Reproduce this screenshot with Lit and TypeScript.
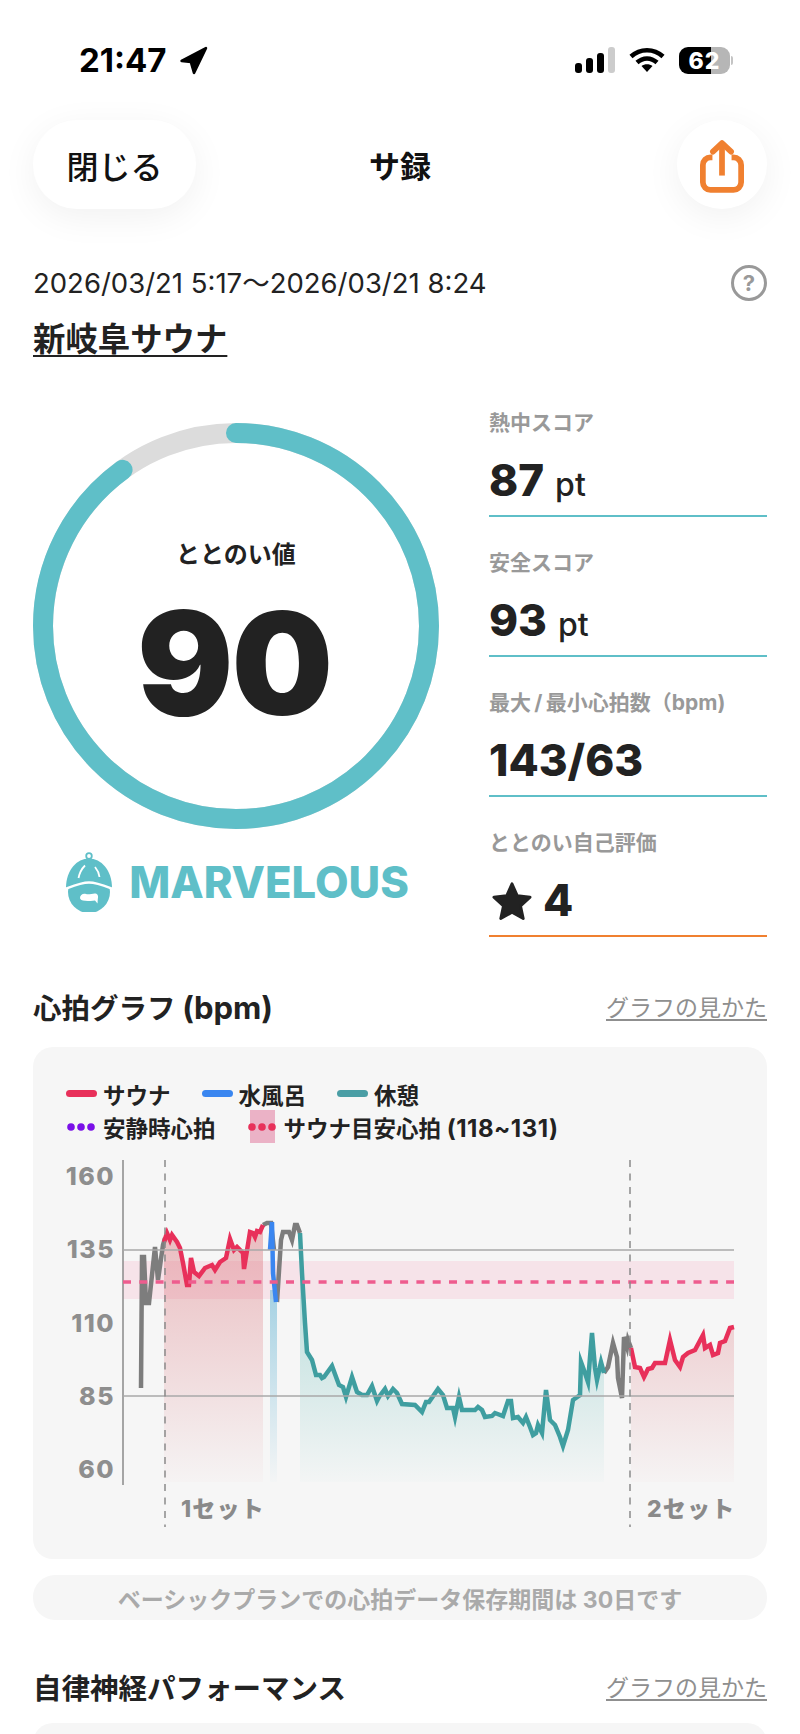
import { LitElement, html, css, svg } from "lit";
import { customElement } from "lit/decorators.js";

type P = [number, number];
const gray1: P[] = [[141,1388],[142,1257],[144,1257],[146,1303],[149,1303],[155,1247],[158,1280],[163,1245],[165,1238]];
const red1: P[] = [[164,1242],[167,1233],[170,1240],[172,1235],[177,1242],[180,1248],[183,1263],[187,1285],[189,1285],[191,1258],[194,1272],[199,1276],[205,1268],[212,1265],[215,1270],[220,1262],[226,1258],[230,1239],[234,1250],[237,1247],[243,1253],[244,1269],[250,1232],[253,1233],[255,1237],[257,1231],[260,1232],[263,1225]];
const gray2: P[] = [[263,1225],[267,1223],[271,1223],[274,1250]];
const blue: P[] = [[270,1250],[272,1222],[273,1273],[276,1302]];
const gray3: P[] = [[277,1302],[281,1240],[283,1232],[289,1232],[292,1240],[295,1225],[297,1225],[300,1233]];
const teal: P[] = [[300,1233],[302,1273],[305,1323],[307,1352],[312,1360],[316,1375],[320,1375],[322,1378],[324,1377],[332,1366],[339,1385],[343,1387],[346,1397],[352,1377],[357,1392],[362,1395],[367,1395],[372,1386],[377,1401],[379,1397],[385,1389],[388,1396],[393,1389],[397,1393],[402,1404],[415,1405],[422,1412],[426,1402],[429,1402],[438,1389],[443,1395],[447,1408],[453,1408],[455,1417],[459,1397],[462,1410],[475,1410],[478,1407],[482,1410],[485,1417],[492,1416],[495,1413],[503,1416],[508,1401],[511,1401],[513,1418],[518,1417],[523,1423],[526,1417],[530,1427],[533,1435],[536,1433],[538,1425],[542,1433],[546,1390],[550,1420],[555,1425],[560,1437],[563,1446],[568,1430],[573,1400],[580,1395],[581,1362],[585,1373],[588,1382],[592,1333],[595,1368],[597,1380],[601,1362],[604,1373]];
const gray4: P[] = [[604,1373],[608,1367],[613,1343],[617,1357],[618,1378],[622,1398],[624,1337],[627,1347],[628,1340],[631,1348]];
const red2: P[] = [[631,1348],[635,1367],[640,1368],[644,1377],[648,1369],[652,1368],[655,1363],[665,1363],[670,1340],[675,1360],[680,1367],[683,1357],[688,1353],[695,1350],[703,1335],[705,1348],[710,1345],[713,1355],[718,1353],[720,1343],[725,1341],[730,1328],[734,1327]];

const pts = (a: P[]) => a.map((p) => p.join(",")).join(" ");
const area = (a: P[], bottom = 1482) =>
  `${a[0][0]},${bottom} ${pts(a)} ${a[a.length - 1][0]},${bottom}`;

const yTicks: [string, number][] = [["160",1185],["135",1258],["110",1332],["85",1405],["60",1478]];

@customElement("app-root")
export class AppRoot extends LitElement {
  static styles = css`
    :host {
      display: block;
      width: 800px;
      height: 1734px;
      overflow: hidden;
      background: #fff;
      color: #222;
      font-family: Inter, "Noto Sans CJK JP", sans-serif;
    }
    .status { height: 120px; display: flex; align-items: center; justify-content: space-between; padding: 0 67px 0 79px; box-sizing: border-box; color: #000; }
    .time { display: flex; align-items: center; gap: 12px; font-size: 33px; font-weight: 700; line-height: 1; }
    .status-right { display: flex; align-items: center; gap: 14px; }
    .battery { position: relative; width: 54px; height: 27px; display: block; }
    .battery::after { content: ""; position: absolute; left: 52px; top: 9px; width: 2px; height: 9px; border-radius: 0 2px 2px 0; background: #c4c4c4; }
    .battery-num { display: grid; place-items: center; width: 51px; height: 27px; border-radius: 9px; font-size: 23px; font-weight: 800; letter-spacing: 1px; color: #fff; background: linear-gradient(90deg, #000 0 63%, #b6b6b6 63% 100%); }
    .nav { height: 89px; padding: 0 33px; display: grid; grid-template-columns: 1fr auto 1fr; align-items: center; }
    .close { justify-self: start; width: 163px; height: 89px; border-radius: 44px; background: #fff; box-shadow: 0 8px 36px rgba(0,0,0,.06); display: grid; place-items: center; font-size: 32px; font-weight: 500; color: #111; }
    .title { font-size: 31px; font-weight: 700; color: #111; }
    .share { justify-self: end; width: 90px; height: 89px; border-radius: 50%; background: #fff; box-shadow: 0 8px 36px rgba(0,0,0,.06); display: grid; place-items: center; padding-top: 2px; box-sizing: border-box; }
    .body { padding: 0 33px; }
    .date-row { margin-top: 57px; height: 34px; display: flex; align-items: center; justify-content: space-between; }
    .date { font-size: 27.500px; color: #222; white-space: nowrap; line-height: 30px; }
    .help { width: 30px; height: 30px; border: 3px solid #999; border-radius: 50%; display: grid; place-items: center; font-size: 22px; font-weight: 700; color: #999; }
    .venue { margin-top: 21px; height: 40px; line-height: 37px; font-size: 32.400px; font-weight: 700; text-decoration: underline; text-decoration-thickness: 2px; text-underline-offset: 4px; white-space: nowrap; }
    .main { margin-top: 48px; display: flex; gap: 50px; align-items: flex-start; }
    .ring-col { width: 406px; padding-top: 14px; flex: none; }
    .ring { display: grid; width: 406px; height: 406px; }
    .ring > * { grid-area: 1 / 1; }
    .ring-text { display: flex; flex-direction: column; align-items: center; }
    .ring-label { margin-top: 114px; height: 36px; line-height: 36px; font-size: 24px; font-weight: 700; }
    .ring-num { margin-top: 22px; margin-right: 4px; height: 136px; line-height: 136px; font-size: 143px; font-weight: 900; letter-spacing: -2px; }
    .brand { margin-top: 25px; height: 56px; display: flex; justify-content: center; align-items: center; gap: 14px; color: #5fbfc8; font-size: 43.500px; font-weight: 800; }
    .stats { flex: 1; display: flex; flex-direction: column; gap: 32px; }
    .stat { border-bottom: 2px solid #5fbfc8; padding-bottom: 6px; }
    .stat.last { border-bottom-color: #f08030; }
    .stat-label { height: 28px; line-height: 28px; font-size: 21px; font-weight: 700; color: #999; white-space: nowrap; }
    .stat-value { margin-top: 15px; height: 57px; display: flex; align-items: baseline; gap: 11px; font-size: 44px; font-weight: 800; line-height: 57px; }
    .stat-value.star { align-items: center; gap: 10px; padding-left: 2px; }
    .unit { font-size: 32px; font-weight: 500; }
    .section { margin-top: 49px; height: 40px; display: flex; align-items: center; justify-content: space-between; }
    .section-title { font-size: 28.500px; font-weight: 700; }
    .section-title .latin { font-size: 31px; }
    .link { font-size: 23px; color: #8f8f8f; text-decoration: underline; text-underline-offset: 3px; }
    .card { margin-top: 21px; height: 512px; background: #f6f6f6; border-radius: 20px; padding-top: 31px; box-sizing: border-box; }
    .card.next { margin-top: 17px; height: 60px; }
    .legend { padding-left: 33px; display: flex; flex-direction: column; gap: 2px; height: 64px; }
    .legend-row { display: flex; height: 31px; align-items: center; gap: 31px; font-size: 22.500px; font-weight: 600; white-space: nowrap; }
    .legend-row .latin { font-size: 24px; font-weight: 700; letter-spacing: .5px; }
    .item { display: flex; align-items: center; gap: 6px; }
    .dash { width: 31px; height: 7px; border-radius: 4px; }
    .c-red { background: #e8305a; }
    .c-blue { background: #3a86f0; }
    .c-teal { background: #4a9ea5; }
    .dots { display: block; }
    .chart { display: block; margin-top: 8px; }
    .tick { font-size: 25px; font-weight: 800; letter-spacing: 1.500px; fill: #8e8e8e; text-anchor: end; font-family: Inter, sans-serif; }
    .set { font-size: 23px; font-weight: 800; letter-spacing: 1.200px; fill: #8a8a8a; font-family: Inter, "Noto Sans CJK JP", sans-serif; }
    .note { margin-top: 16px; height: 45px; border-radius: 22px; background: #f6f6f6; display: grid; place-items: center; font-size: 23px; font-weight: 700; color: #aaa; white-space: nowrap; }
    .section.two { margin-top: 46px; }
  `;

  private statusBar() {
    return html`<div class="status">
      <div class="time">21:47
        <svg width="29" height="29" viewBox="0 0 28 28"><path d="M2.500 14.500 26 2 14.500 26 11.500 15.500Z" fill="#000" stroke="#000" stroke-width="2.500" stroke-linejoin="round"/></svg>
      </div>
      <div class="status-right">
        <svg width="40" height="26" viewBox="0 0 40 26">
          <rect x="0" y="16" width="7" height="10" rx="3" fill="#000"/>
          <rect x="11" y="11" width="7" height="15" rx="3" fill="#000"/>
          <rect x="22" y="6" width="7" height="20" rx="3" fill="#000"/>
          <rect x="33" y="0" width="7" height="26" rx="3" fill="#ccc"/>
        </svg>
        <svg width="36" height="26" viewBox="0 0 36 26" fill="none" stroke="#000" stroke-width="4.500">
          <path d="M2 9.500C11 1 25 1 34 9.500"/>
          <path d="M8 15.500c6-5.500 14-5.500 20 0"/>
          <path d="M18 25l-5.500-6c3-2.500 8-2.500 11 0Z" fill="#000" stroke="none"/>
        </svg>
        <div class="battery"><div class="battery-num">62</div></div>
      </div>
    </div>`;
  }

  private chart() {
    return html`<svg class="chart" width="734" height="400" viewBox="33 1150 734 400">
      <defs>
        <linearGradient id="gr" gradientUnits="userSpaceOnUse" x1="0" y1="1225" x2="0" y2="1482">
          <stop offset="0" stop-color="#d96a72" stop-opacity=".42"/>
          <stop offset="1" stop-color="#d96a72" stop-opacity=".02"/>
        </linearGradient>
        <linearGradient id="gt" gradientUnits="userSpaceOnUse" x1="0" y1="1300" x2="0" y2="1482">
          <stop offset="0" stop-color="#5fb9b5" stop-opacity=".36"/>
          <stop offset="1" stop-color="#5fb9b5" stop-opacity=".02"/>
        </linearGradient>
        <linearGradient id="gb" gradientUnits="userSpaceOnUse" x1="0" y1="1300" x2="0" y2="1482">
          <stop offset="0" stop-color="#7fc0da" stop-opacity=".65"/>
          <stop offset="1" stop-color="#7fc0da" stop-opacity=".02"/>
        </linearGradient>
      </defs>
      ${yTicks.map(([t, y]) => svg`<text class="tick" x="115" y=${y}>${t}</text>`)}
      <rect x="123" y="1261" width="611" height="38" fill="#f6e3e9"/>
      <polygon points=${area(red1)} fill="url(#gr)"/>
      <polygon points=${area(red2)} fill="url(#gr)"/>
      <rect x="270" y="1290" width="7" height="192" fill="url(#gb)"/>
      <polygon points=${area(teal)} fill="url(#gt)"/>
      <g fill="none" stroke-width="4.500" stroke-linejoin="miter" stroke-miterlimit="6">
        <polyline points=${pts(gray1)} stroke="#7d7d7d"/>
        <polyline points=${pts(gray2)} stroke="#7d7d7d"/>
        <polyline points=${pts(gray3)} stroke="#7d7d7d"/>
        <polyline points=${pts(gray4)} stroke="#7d7d7d"/>
        <polyline points=${pts(blue)} stroke="#3a86f0"/>
        <polyline points=${pts(teal)} stroke="#3f9ea0"/>
        <polyline points=${pts(red1)} stroke="#e8305a"/>
        <polyline points=${pts(red2)} stroke="#e8305a"/>
      </g>
      <line x1="123" y1="1160" x2="123" y2="1485" stroke="#8a8a8a" stroke-width="1.500"/>
      <line x1="123" y1="1250" x2="734" y2="1250" stroke="#a8a8a8" stroke-width="1.500"/>
      <line x1="123" y1="1396" x2="734" y2="1396" stroke="#a8a8a8" stroke-width="1.500"/>
      <line x1="123" y1="1282" x2="734" y2="1282" stroke="#ee5c8e" stroke-width="3.500" stroke-dasharray="8 8.300"/>
      <line x1="165" y1="1160" x2="165" y2="1527" stroke="#8a8a8a" stroke-width="1.500" stroke-dasharray="7 6.500"/>
      <line x1="630" y1="1160" x2="630" y2="1527" stroke="#8a8a8a" stroke-width="1.500" stroke-dasharray="7 6.500"/>
      <text class="set" x="181" y="1517">1セット</text>
      <text class="set" x="647" y="1517">2セット</text>
    </svg>`;
  }

  private legend() {
    const dots = (c: string) => svg`<circle cx="5" cy="17" r="3.800" fill=${c}/><circle cx="15" cy="17" r="3.800" fill=${c}/><circle cx="25" cy="17" r="3.800" fill=${c}/>`;
    return html`<div class="legend">
      <div class="legend-row">
        <div class="item"><div class="dash c-red"></div>サウナ</div>
        <div class="item"><div class="dash c-blue"></div>水風呂</div>
        <div class="item"><div class="dash c-teal"></div>休憩</div>
      </div>
      <div class="legend-row">
        <div class="item"><svg class="dots" width="31" height="34" viewBox="0 0 31 34">${dots("#7a10e8")}</svg>安静時心拍</div>
        <div class="item"><svg class="dots" width="31" height="34" viewBox="0 0 31 34"><rect x="3" y="0" width="25" height="33" fill="#ebb2c6"/>${dots("#e8305a")}</svg><span>サウナ目安心拍 <span class="latin">(118~131)</span></span></div>
      </div>
    </div>`;
  }

  private stat(label: string, value: string, unit?: string) {
    return html`<div class="stat">
      <div class="stat-label">${label}</div>
      <div class="stat-value"><span>${value}</span>${unit ? html`<span class="unit">${unit}</span>` : ""}</div>
    </div>`;
  }

  render() {
    return html`
      ${this.statusBar()}
      <div class="nav">
        <div class="close">閉じる</div>
        <div class="title">サ録</div>
        <div class="share">
          <svg width="44" height="54" viewBox="0 0 46 56" fill="none" stroke="#f08030" stroke-width="6">
            <path d="M13 19H11a8 8 0 0 0-8 8v18a8 8 0 0 0 8 8h24a8 8 0 0 0 8-8V27a8 8 0 0 0-8-8h-2"/>
            <path d="M23 38V5"/>
            <path d="M13.500 13 23 4l9.500 9" stroke-linecap="round" stroke-linejoin="round"/>
          </svg>
        </div>
      </div>
      <div class="body">
        <div class="date-row">
          <div class="date">2026/03/21 5:17～2026/03/21 8:24</div>
          <div class="help">?</div>
        </div>
        <div class="venue">新岐阜サウナ</div>
        <div class="main">
          <div class="ring-col">
            <div class="ring">
              <svg width="406" height="406" viewBox="0 0 406 406" fill="none" stroke-width="20">
                <circle cx="203" cy="203" r="193" stroke="#dcdcdc"/>
                <circle cx="203" cy="203" r="193" stroke="#5fbfc8" stroke-linecap="round" pathLength="100" stroke-dasharray="90 10" transform="rotate(-90 203 203)"/>
              </svg>
              <div class="ring-text">
                <div class="ring-label">ととのい値</div>
                <div class="ring-num">90</div>
              </div>
            </div>
            <div class="brand">
              <svg width="52" height="60" viewBox="6 6 52 60">
                <circle cx="32" cy="10" r="2.800" fill="none" stroke="#5fbfc8" stroke-width="1.800"/>
                <path d="M9 42C9 24 20 12.500 32 12.500S55 24 55 42Z" fill="#5fbfc8"/>
                <circle cx="32" cy="46" r="21" fill="#5fbfc8"/>
                <path d="M6.500 43.500C16 40 24 36.500 32 36.500s16 3.500 25.500 7" fill="none" stroke="#fff" stroke-width="2.500"/>
                <path d="M21.500 32C22.500 27 24.500 23 28 19.500M42.500 31c-.5-4-2-7-4.500-10" fill="none" stroke="#fff" stroke-width="1.800"/>
                <path d="M23 52c0-3 3-5 6-4 3 1 7-1 9.500-.5 2.500.5 3 3 2.300 5.500l-.3 4.500-2.500-3c-3 .7-6 .5-10 .2-3-.2-5-1-5-2.700Z" fill="#fff"/>
              </svg>
              <span>MARVELOUS</span>
            </div>
          </div>
          <div class="stats">
            ${this.stat("熱中スコア", "87", "pt")}
            ${this.stat("安全スコア", "93", "pt")}
            ${this.stat("最大\u2009/\u2009最小心拍数（bpm)", "143/63")}
            <div class="stat last">
              <div class="stat-label">ととのい自己評価</div>
              <div class="stat-value star">
                <svg width="42" height="40" viewBox="0 0 44 42"><path d="M22 3l5.600 12.500 13.400 1.500-10 9.200 2.800 13.300L22 32.800 10.200 39.500 13 26.200 3 17l13.400-1.500Z" fill="#222" stroke="#222" stroke-width="3" stroke-linejoin="round"/></svg>
                <span>4</span>
              </div>
            </div>
          </div>
        </div>
        <div class="section">
          <div class="section-title">心拍グラフ <span class="latin">(bpm)</span></div>
          <div class="link">グラフの見かた</div>
        </div>
        <div class="card">
          ${this.legend()}
          ${this.chart()}
        </div>
        <div class="note">ベーシックプランでの心拍データ保存期間は 30日です</div>
        <div class="section two">
          <div class="section-title">自律神経パフォーマンス</div>
          <div class="link">グラフの見かた</div>
        </div>
        <div class="card next"></div>
      </div>
    `;
  }
}
